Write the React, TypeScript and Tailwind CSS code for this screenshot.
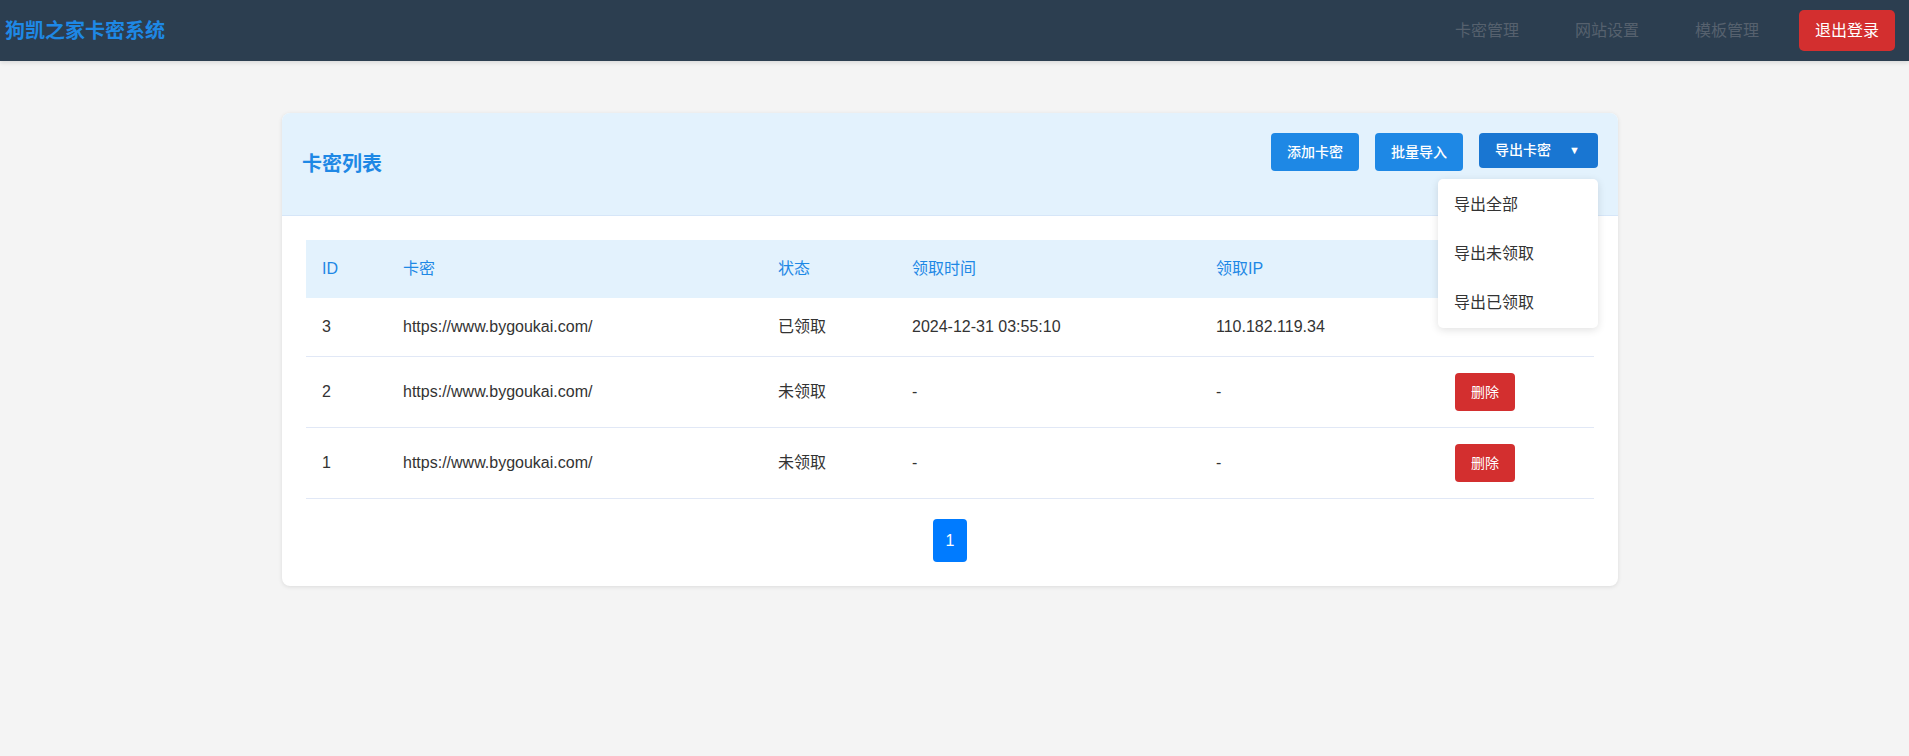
import React from "react";

const font = { fontFamily: '"Liberation Sans", "Noto Sans CJK SC", Arial, sans-serif' };

const rows = [
  { id: 3, card: "https://www.bygoukai.com/", status: "已领取", time: "2024-12-31 03:55:10", ip: "110.182.119.34", del: false },
  { id: 2, card: "https://www.bygoukai.com/", status: "未领取", time: "-", ip: "-", del: true },
  { id: 1, card: "https://www.bygoukai.com/", status: "未领取", time: "-", ip: "-", del: true },
];

export default function App() {
  return (
    <div className="min-h-[756px] bg-[#f4f4f4] text-[#333]" style={font}>
      <header className="flex h-[61px] items-center justify-between bg-[#2c3e50] pl-[5px] pr-[14px] shadow-[0_2px_4px_rgba(0,0,0,0.1)]">
        <div className="text-[20px] font-bold text-[#1e88e5]">狗凯之家卡密系统</div>
        <nav className="flex items-center">
          <div className="flex items-center gap-4">
            <a className="px-5 text-[16px] text-[#56616e]">卡密管理</a>
            <a className="px-5 text-[16px] text-[#56616e]">网站设置</a>
            <a className="px-5 text-[16px] text-[#56616e]">模板管理</a>
          </div>
          <button className="ml-5 flex h-[41px] items-center rounded-[5px] bg-[#d32f2f] px-4 text-[16px] text-white">退出登录</button>
        </nav>
      </header>

      <main className="pl-[282px] pt-[52px]">
        <div className="w-[1336px] rounded-lg bg-white shadow-[0_1px_4px_rgba(0,0,0,0.1)]">
          <div className="flex h-[103px] items-start justify-between rounded-t-lg border-b border-[#d6e6f8] bg-[#e3f2fd] px-5">
            <h2 className="self-center text-[20px] font-bold text-[#1e88e5]">卡密列表</h2>
            <div className="mt-5 flex items-start gap-4">
              <button className="h-[38px] rounded-[4px] bg-[#1e88e5] px-4 text-[14px] font-medium text-white">添加卡密</button>
              <button className="h-[38px] rounded-[4px] bg-[#1e88e5] px-4 text-[14px] font-medium text-white">批量导入</button>
              <div className="relative">
                <button className="flex h-[35px] items-center gap-[18px] rounded-[4px] bg-[#1976d2] pl-4 pr-[18px] text-[14px] font-medium text-white">
                  <span>导出卡密</span>
                  <span className="text-[11px]">▼</span>
                </button>
                <div className="absolute right-0 top-[46px] z-10 w-[160px] rounded-[5px] bg-white py-px shadow-[0_2px_8px_rgba(0,0,0,0.12)]">
                  <div className="px-4 py-3 text-[16px] leading-[25px] text-[#333]">导出全部</div>
                  <div className="px-4 py-3 text-[16px] leading-[25px] text-[#333]">导出未领取</div>
                  <div className="px-4 py-3 text-[16px] leading-[25px] text-[#333]">导出已领取</div>
                </div>
              </div>
            </div>
          </div>

          <div className="p-6">
            <table className="w-[1288px] table-fixed border-collapse text-left text-[16px]">
              <thead>
                <tr className="bg-[#e3f2fd] text-[#1e88e5]">
                  <th className="w-[81px] px-4 py-4 font-normal leading-[26px]">ID</th>
                  <th className="w-[375px] px-4 py-4 font-normal leading-[26px]">卡密</th>
                  <th className="w-[134px] px-4 py-4 font-normal leading-[26px]">状态</th>
                  <th className="w-[304px] px-4 py-4 font-normal leading-[26px]">领取时间</th>
                  <th className="w-[239px] px-4 py-4 font-normal leading-[26px]">领取IP</th>
                  <th className="w-[155px] px-4 py-4 font-normal leading-[26px]">操作</th>
                </tr>
              </thead>
              <tbody>
                {rows.map((r) => (
                  <tr key={r.id} className="border-b border-[#e1e8f6]">
                    <td className="px-4 py-4 leading-[26px]">{r.id}</td>
                    <td className="px-4 py-4 leading-[26px]">{r.card}</td>
                    <td className="px-4 py-4 leading-[26px]">{r.status}</td>
                    <td className="px-4 py-4 leading-[26px]">{r.time}</td>
                    <td className="px-4 py-4 leading-[26px]">{r.ip}</td>
                    <td className="px-4 py-4 leading-[26px]">
                      {r.del && (
                        <button className="h-[38px] w-[60px] rounded-[4px] bg-[#d32f2f] text-[14px] text-white">删除</button>
                      )}
                    </td>
                  </tr>
                ))}
              </tbody>
            </table>
            <div className="mt-5 flex justify-center">
              <button className="h-[43px] w-[34px] rounded-[4px] bg-[#007bff] text-[16px] text-white">1</button>
            </div>
          </div>
        </div>
      </main>
    </div>
  );
}
